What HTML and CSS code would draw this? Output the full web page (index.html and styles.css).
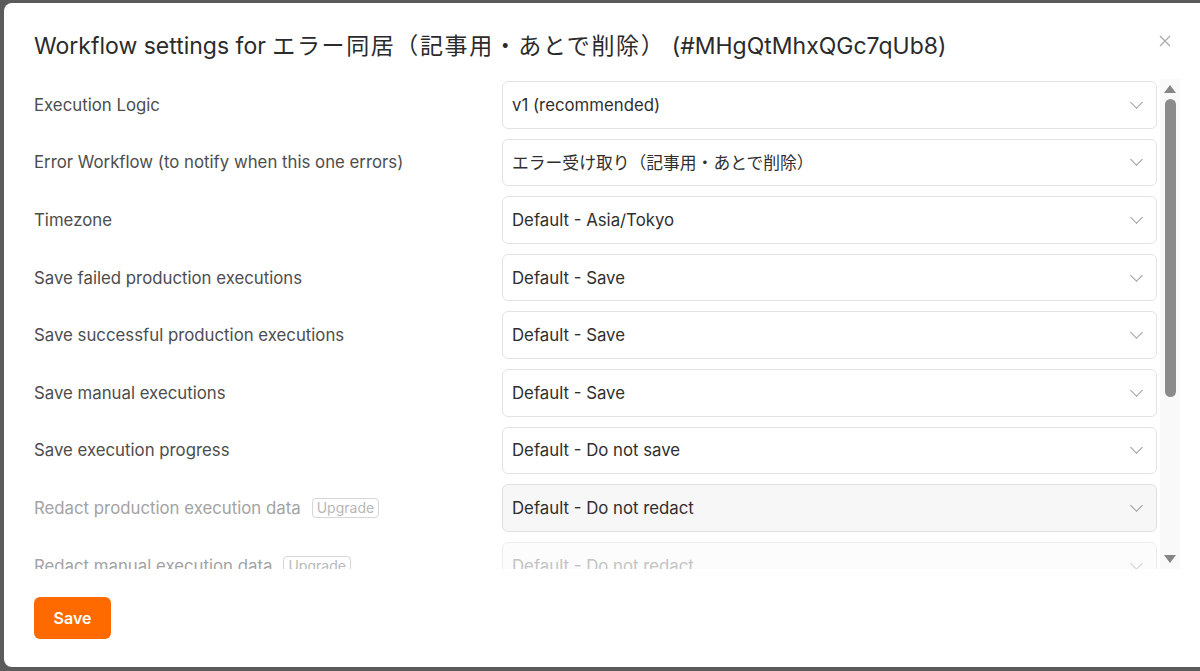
FILE: index.html
```html
<!DOCTYPE html>
<html lang="ja">
<head>
    <meta charset="UTF-8">
    <meta name="viewport" content="width=device-width, initial-scale=1.0">
    <title>Workflow settings</title>
    <link rel="stylesheet" href="styles.css">
</head>
<body>
    <div class="modal">
        <div class="modal-header">
            <h1>Workflow settings for <span class="wf-name">エラー同居（記事用・あとで削除）</span> (#MHgQtMhxQGc7qUb8)</h1>
            <button class="close-btn" aria-label="Close">
                <svg width="12" height="12" viewBox="0 0 12 12"><path d="M1 1L11 11M11 1L1 11" stroke="#a8a8a8" stroke-width="1.2" fill="none"/></svg>
            </button>
        </div>

        <div class="settings-wrap">
            <div class="settings">
                <div class="setting-row">
                    <div class="label">Execution Logic</div>
                    <div class="select">v1 (recommended)<span class="chevron"></span></div>
                </div>
                <div class="setting-row">
                    <div class="label">Error Workflow (to notify when this one errors)</div>
                    <div class="select">エラー受け取り（記事用・あとで削除）<span class="chevron"></span></div>
                </div>
                <div class="setting-row">
                    <div class="label">Timezone</div>
                    <div class="select">Default - Asia/Tokyo<span class="chevron"></span></div>
                </div>
                <div class="setting-row">
                    <div class="label">Save failed production executions</div>
                    <div class="select">Default - Save<span class="chevron"></span></div>
                </div>
                <div class="setting-row">
                    <div class="label">Save successful production executions</div>
                    <div class="select">Default - Save<span class="chevron"></span></div>
                </div>
                <div class="setting-row">
                    <div class="label">Save manual executions</div>
                    <div class="select">Default - Save<span class="chevron"></span></div>
                </div>
                <div class="setting-row">
                    <div class="label">Save execution progress</div>
                    <div class="select">Default - Do not save<span class="chevron"></span></div>
                </div>
                <div class="setting-row">
                    <div class="label locked">Redact production execution data <span class="badge">Upgrade</span></div>
                    <div class="select select-grey">Default - Do not redact<span class="chevron"></span></div>
                </div>
                <div class="setting-row">
                    <div class="label locked">Redact manual execution data <span class="badge">Upgrade</span></div>
                    <div class="select select-disabled">Default - Do not redact<span class="chevron"></span></div>
                </div>
            </div>

            <!-- scrollbar for the settings list -->
            <div class="scrollbar">
                <div class="scroll-btn"><span class="arrow-up"></span></div>
                <div class="scroll-track"><div class="scroll-thumb"></div></div>
                <div class="scroll-btn"><span class="arrow-down"></span></div>
            </div>
        </div>

        <div class="modal-footer">
            <button class="save-btn">Save</button>
        </div>
    </div>
</body>
</html>
```

FILE: styles.css
```css
body {
    margin: 0;
    background-color: #5b5b5b;
    font-family: Inter, "Noto Sans CJK JP", sans-serif;
    overflow: hidden;
    height: 671px;
}

.modal {
    width: 1226px;
    height: 664px;
    margin: 3px 0 0 4px;
    background-color: white;
    border-radius: 8px;
    box-sizing: border-box;
    padding: 0 0 0 30px;
    display: flex;
    flex-direction: column;
}

.modal-header {
    width: 1137px;
    display: flex;
    justify-content: space-between;
    align-items: flex-start;
    padding-top: 28px;
    margin-bottom: 18px;
}

h1 {
    margin: 0;
    font-size: 23px;
    line-height: 30px;
    font-weight: 400;
    color: #2b2b2b;
}

.wf-name {
    letter-spacing: 1.6px;
}

.close-btn {
    background: none;
    border: none;
    padding: 0;
    margin-top: 4px;
    cursor: pointer;
}

.settings-wrap {
    display: flex;
    gap: 3px;
    height: 490px;
}

.settings {
    width: 1123px;
    overflow: hidden;
    padding-top: 2px;
}

.setting-row {
    display: grid;
    grid-template-columns: 468px 655px;
    align-items: center;
    margin-bottom: 10px;
}

.label {
    font-size: 16.8px;
    color: #4d4d4d;
    display: flex;
    align-items: center;
    gap: 11px;
}

.label.locked {
    color: #a3a3a3;
}

.badge {
    font-size: 14px;
    color: #b8b8b8;
    border: 1px solid #d6d6d6;
    border-radius: 4px;
    padding: 0 4px;
    line-height: 18px;
}

.select {
    position: relative;
    height: 47.6px;
    box-sizing: border-box;
    border: 1px solid #e3e3e3;
    border-radius: 6px;
    padding: 0 40px 0 9px;
    display: flex;
    align-items: center;
    font-size: 16.8px;
    color: #2f2f2f;
    background-color: white;
}

.select-grey {
    background-color: #f7f7f7;
    border-color: #e0e0e0;
}

.select-disabled {
    background-color: #fcfcfc;
    border-color: #ededed;
    color: #c4c4c4;
}

.chevron {
    position: absolute;
    right: 15px;
    top: 50%;
    width: 8px;
    height: 8px;
    margin-top: -7px;
    border-right: 1px solid #9a9a9a;
    border-bottom: 1px solid #9a9a9a;
    transform: rotate(45deg);
}

.select-disabled .chevron {
    border-color: #cfcfcf;
}

/* scrollbar column */
.scrollbar {
    width: 20px;
    background-color: #f9f9f9;
    display: flex;
    flex-direction: column;
}

.scroll-btn {
    height: 20px;
    display: flex;
    align-items: center;
    justify-content: center;
}

.arrow-up {
    width: 0;
    height: 0;
    border-left: 6px solid transparent;
    border-right: 6px solid transparent;
    border-bottom: 8px solid #858585;
}

.arrow-down {
    width: 0;
    height: 0;
    border-left: 6px solid transparent;
    border-right: 6px solid transparent;
    border-top: 8px solid #858585;
}

.scroll-track {
    flex: 1;
    padding: 0 4px 0 5px;
}

.scroll-thumb {
    height: 298px;
    background-color: #8b8b8b;
    border-radius: 6px;
}

.modal-footer {
    padding-top: 28px;
}

.save-btn {
    background-color: #ff6a00;
    color: white;
    border: none;
    border-radius: 6px;
    width: 77px;
    height: 42px;
    font-family: Inter, sans-serif;
    font-size: 16px;
    font-weight: 600;
    cursor: pointer;
}
```
